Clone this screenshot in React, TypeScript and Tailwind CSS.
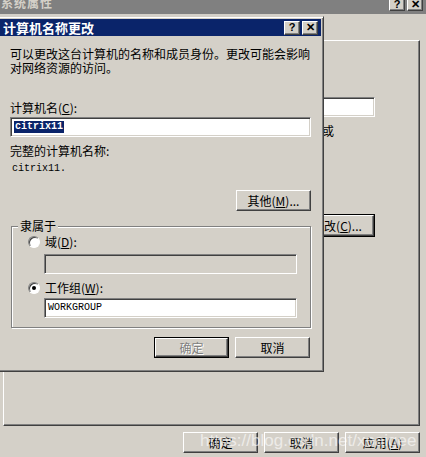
import React from 'react';

const raised =
  'border border-t-white border-l-white border-r-[#404040] border-b-[#404040] shadow-[inset_-1px_-1px_#808080]';
const sunken =
  'border border-t-[#808080] border-l-[#808080] border-r-white border-b-white shadow-[inset_1px_1px_#404040,inset_-1px_-1px_#d4d0c8]';

function Btn({
  children,
  className = '',
  isDefault = false,
  disabled = false,
}: {
  children: React.ReactNode;
  className?: string;
  isDefault?: boolean;
  disabled?: boolean;
}) {
  const inner = (
    <div
      className={`flex h-full w-full items-center justify-center bg-[#d4d0c8] leading-[14px] ${raised} ${
        disabled ? 'text-[#808080] [text-shadow:1px_1px_white]' : 'text-black'
      }`}
    >
      {children}
    </div>
  );
  if (isDefault) {
    return <div className={`border border-black ${className}`}>{inner}</div>;
  }
  return <div className={className}>{inner}</div>;
}

function CaptionBtn({ glyph, className = '' }: { glyph: string; className?: string }) {
  return (
    <div
      className={`flex h-[14px] w-[16px] items-center justify-center bg-[#d4d0c8] font-['Liberation_Sans'] text-[11px] font-bold leading-none text-black ${raised} ${className}`}
    >
      {glyph}
    </div>
  );
}

function TextBox({
  children,
  className = '',
  disabled = false,
}: {
  children?: React.ReactNode;
  className?: string;
  disabled?: boolean;
}) {
  return (
    <div
      className={`flex items-center pl-[3px] ${disabled ? 'bg-[#d4d0c8]' : 'bg-white'} ${sunken} ${className}`}
    >
      {children}
    </div>
  );
}

function Radio({ checked = false }: { checked?: boolean }) {
  return (
    <div className="flex h-[12px] w-[12px] items-center justify-center rounded-full border border-t-[#808080] border-l-[#808080] border-r-white border-b-white bg-white shadow-[inset_1px_1px_#404040]">
      {checked && <div className="h-[4px] w-[4px] rounded-full bg-black" />}
    </div>
  );
}

export default function App() {
  return (
    <div className="relative h-[457px] w-[426px] overflow-hidden bg-[#d4d0c8] font-['Noto_Sans_CJK_SC',sans-serif] text-[12px] text-black">
      {/* background window: 系统属性 */}
      <div className="flex h-full flex-col">
        <div className="flex h-[14px] items-start justify-between bg-[#808080]">
          <span className="-mt-[4px] pl-[1px] text-[12px] font-bold leading-[14px] tracking-[1px] text-[#d4d0c8]">
            系统属性
          </span>
          <div className="-mt-[3px] flex gap-[2px] pr-[3px]">
            <CaptionBtn glyph="?" />
            <CaptionBtn glyph="✕" />
          </div>
        </div>

        <div className={`ml-[3px] mt-[26px] h-[386px] w-[417px] ${raised}`}>
          <div className="flex flex-col items-end pr-[44px]">
            <TextBox className="mt-[56px] h-[20px] w-[150px]" />
            <div className="mr-[41px] mt-[7px] leading-[14px]">要重命名这台计算机或</div>
            <Btn isDefault className="mt-[76px] h-[23px] w-[76px]">
              <span>
                更改(<u>C</u>)...
              </span>
            </Btn>
          </div>
        </div>

        <div className="mt-[6px] flex justify-end gap-[6px] pr-[6px]">
          <Btn className="h-[21px] w-[75px]">确定</Btn>
          <Btn className="h-[21px] w-[75px]">取消</Btn>
          <Btn className="h-[21px] w-[75px]">
            <span>
              应用(<u>A</u>)
            </span>
          </Btn>
        </div>
      </div>

      {/* watermark */}
      <div className="pointer-events-none absolute left-[200px] top-[430px] font-['Liberation_Sans',sans-serif] text-[17px] leading-[22px] text-white/60">
        https://blog.csdn.net/xoaigee
      </div>

      {/* dialog: 计算机名称更改 */}
      <div className="absolute left-[-3px] top-[16px] flex h-[356px] w-[327px] flex-col border border-t-[#d4d0c8] border-l-[#d4d0c8] border-r-[#404040] border-b-[#404040] bg-[#d4d0c8] p-[2px] shadow-[inset_1px_1px_white,inset_-1px_-1px_#808080]">
        <div className="flex h-[17px] shrink-0 items-center justify-between bg-[#0a246a] pl-[3px] pr-[3px]">
          <span className="text-[13px] font-bold leading-[14px] text-white">计算机名称更改</span>
          <div className="flex gap-[2px]">
            <CaptionBtn glyph="?" />
            <CaptionBtn glyph="✕" />
          </div>
        </div>

        <div className="flex flex-col pl-[10px] pr-[10px]">
          <div className="mt-[11px] leading-[14px]">
            可以更改这台计算机的名称和成员身份。更改可能会影响
            <br />
            对网络资源的访问。
          </div>

          <div className="mt-[26px] leading-[14px]">
            计算机名(<u>C</u>):
          </div>
          <TextBox className="mt-[2px] h-[20px] w-full">
            <span className="bg-[#0a246a] px-[1px] font-['Liberation_Mono',monospace] text-[10px] font-bold leading-[12px] text-white">
              citrix11
            </span>
          </TextBox>

          <div className="mt-[7px] leading-[14px]">完整的计算机名称:</div>
          <div className="mt-[4px] pl-[2px] font-['Liberation_Mono',monospace] text-[10px] leading-[14px]">
            citrix11.
          </div>

          <Btn className="mt-[14px] h-[21px] w-[75px] self-end">
            <span>
              其他(<u>M</u>)...
            </span>
          </Btn>

          <div className="relative ml-[1px] mt-[15px] h-[102px] border border-[#808080] shadow-[1px_1px_0_white,inset_1px_1px_0_white]">
            <span className="absolute -top-[8px] left-[6px] bg-[#d4d0c8] px-[2px] leading-[14px]">隶属于</span>
            <div className="flex flex-col pl-[16px] pt-[8px]">
              <div className="flex h-[14px] items-center gap-[5px]">
                <Radio />
                <span className="leading-[14px]">
                  域(<u>D</u>):
                </span>
              </div>
              <TextBox disabled className="ml-[16px] mt-[5px] h-[20px] w-[253px]" />
              <div className="mt-[7px] flex h-[14px] items-center gap-[5px]">
                <Radio checked />
                <span className="leading-[14px]">
                  工作组(<u>W</u>):
                </span>
              </div>
              <TextBox className="ml-[16px] mt-[3px] h-[20px] w-[253px]">
                <span className="font-['Liberation_Mono',monospace] text-[10px] leading-[12px]">WORKGROUP</span>
              </TextBox>
            </div>
          </div>

          <div className="mt-[9px] flex justify-end gap-[6px] pr-[1px]">
            <Btn isDefault disabled className="h-[21px] w-[75px]">
              确定
            </Btn>
            <Btn className="h-[21px] w-[75px]">取消</Btn>
          </div>
        </div>
      </div>
    </div>
  );
}
